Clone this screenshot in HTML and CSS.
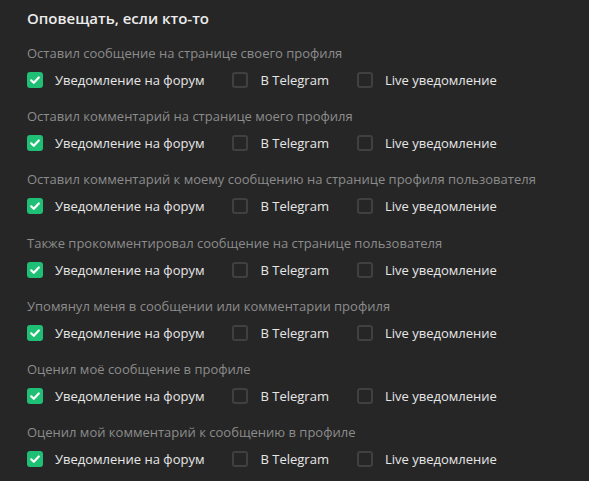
FILE: index.html
```html
<!DOCTYPE html>
<html lang="ru">
<head>
<meta charset="utf-8">
<link rel="stylesheet" href="styles.css">
</head>
<body>
<div class="panel">
  <h3 class="title">Оповещать, если кто-то</h3>

  <div class="group">
    <div class="label">Оставил сообщение на странице своего профиля</div>
    <div class="opts">
      <label class="opt"><span class="cb on"><svg viewBox="0 0 16 16"><path d="M4.2 8.3l2.6 2.5 5-5.3"/></svg></span><span class="txt">Уведомление на форум</span></label>
      <label class="opt"><span class="cb"></span><span class="txt">В Telegram</span></label>
      <label class="opt"><span class="cb"></span><span class="txt">Live уведомление</span></label>
    </div>
  </div>

  <div class="group">
    <div class="label">Оставил комментарий на странице моего профиля</div>
    <div class="opts">
      <label class="opt"><span class="cb on"><svg viewBox="0 0 16 16"><path d="M4.2 8.3l2.6 2.5 5-5.3"/></svg></span><span class="txt">Уведомление на форум</span></label>
      <label class="opt"><span class="cb"></span><span class="txt">В Telegram</span></label>
      <label class="opt"><span class="cb"></span><span class="txt">Live уведомление</span></label>
    </div>
  </div>

  <div class="group">
    <div class="label">Оставил комментарий к моему сообщению на странице профиля пользователя</div>
    <div class="opts">
      <label class="opt"><span class="cb on"><svg viewBox="0 0 16 16"><path d="M4.2 8.3l2.6 2.5 5-5.3"/></svg></span><span class="txt">Уведомление на форум</span></label>
      <label class="opt"><span class="cb"></span><span class="txt">В Telegram</span></label>
      <label class="opt"><span class="cb"></span><span class="txt">Live уведомление</span></label>
    </div>
  </div>

  <div class="group">
    <div class="label">Также прокомментировал сообщение на странице пользователя</div>
    <div class="opts">
      <label class="opt"><span class="cb on"><svg viewBox="0 0 16 16"><path d="M4.2 8.3l2.6 2.5 5-5.3"/></svg></span><span class="txt">Уведомление на форум</span></label>
      <label class="opt"><span class="cb"></span><span class="txt">В Telegram</span></label>
      <label class="opt"><span class="cb"></span><span class="txt">Live уведомление</span></label>
    </div>
  </div>

  <div class="group">
    <div class="label">Упомянул меня в сообщении или комментарии профиля</div>
    <div class="opts">
      <label class="opt"><span class="cb on"><svg viewBox="0 0 16 16"><path d="M4.2 8.3l2.6 2.5 5-5.3"/></svg></span><span class="txt">Уведомление на форум</span></label>
      <label class="opt"><span class="cb"></span><span class="txt">В Telegram</span></label>
      <label class="opt"><span class="cb"></span><span class="txt">Live уведомление</span></label>
    </div>
  </div>

  <div class="group">
    <div class="label">Оценил моё сообщение в профиле</div>
    <div class="opts">
      <label class="opt"><span class="cb on"><svg viewBox="0 0 16 16"><path d="M4.2 8.3l2.6 2.5 5-5.3"/></svg></span><span class="txt">Уведомление на форум</span></label>
      <label class="opt"><span class="cb"></span><span class="txt">В Telegram</span></label>
      <label class="opt"><span class="cb"></span><span class="txt">Live уведомление</span></label>
    </div>
  </div>

  <div class="group">
    <div class="label">Оценил мой комментарий к сообщению в профиле</div>
    <div class="opts">
      <label class="opt"><span class="cb on"><svg viewBox="0 0 16 16"><path d="M4.2 8.3l2.6 2.5 5-5.3"/></svg></span><span class="txt">Уведомление на форум</span></label>
      <label class="opt"><span class="cb"></span><span class="txt">В Telegram</span></label>
      <label class="opt"><span class="cb"></span><span class="txt">Live уведомление</span></label>
    </div>
  </div>
</div>
</body>
</html>
```

FILE: styles.css
```css
html, body {
  margin: 0;
  padding: 0;
  background: #262626;
}
body {
  font-family: "Open Sans", "Noto Sans", sans-serif;
  height: 481px;
  overflow: hidden;
}
.panel {
  padding: 8px 0 0 27px;
}
.title {
  margin: 0 0 15px;
  font-size: 15px;
  line-height: 20px;
  font-weight: 600;
  color: #ececec;
}
.group {
  margin-bottom: 16.2px;
}
.label {
  font-size: 13px;
  line-height: 20px;
  color: #8c8c8c;
  margin-bottom: 7px;
}
.opts {
  display: flex;
  gap: 28px;
  height: 20px;
  align-items: center;
}
.opt {
  display: flex;
  align-items: center;
  gap: 12px;
}
.cb {
  box-sizing: border-box;
  width: 16px;
  height: 16px;
  border: 2px solid #404040;
  border-radius: 3px;
  display: block;
}
.cb.on {
  background: #1fbf75;
  border: none;
}
.cb svg {
  display: block;
  width: 16px;
  height: 16px;
}
.cb svg path {
  fill: none;
  stroke: #fff;
  stroke-width: 2.2;
  stroke-linecap: round;
  stroke-linejoin: round;
}
.txt {
  font-size: 13px;
  line-height: 20px;
  font-weight: 500;
  color: #e6e6e6;
}
```
